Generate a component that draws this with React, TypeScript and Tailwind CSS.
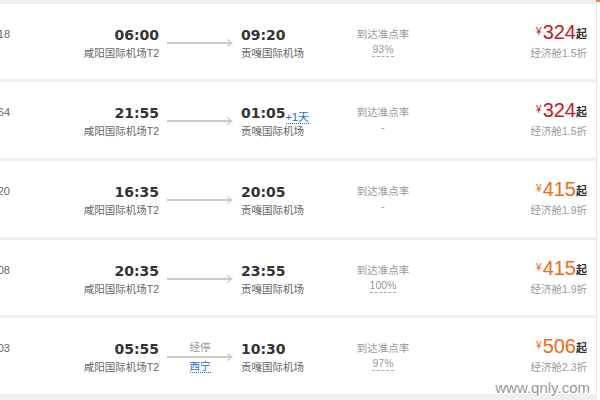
import React from "react";

type Flight = {
  no: string;
  dep: string;
  arr: string;
  plus?: string;
  via?: string;
  rate: string;
  price: string;
  disc: string;
  red: boolean;
  h: string;
};

const flights: Flight[] = [
  { no: "MU2218", dep: "06:00", arr: "09:20", rate: "93%", price: "324", disc: "经济舱1.5折", red: true, h: "h-[75px]" },
  { no: "MU2364", dep: "21:55", arr: "01:05", plus: "+1天", rate: "-", price: "324", disc: "经济舱1.5折", red: true, h: "h-[76px]" },
  { no: "CA1220", dep: "16:35", arr: "20:05", rate: "-", price: "415", disc: "经济舱1.9折", red: false, h: "h-[76px]" },
  { no: "CA4308", dep: "20:35", arr: "23:55", rate: "100%", price: "415", disc: "经济舱1.9折", red: false, h: "h-[75px]" },
  { no: "CA4303", dep: "05:55", arr: "10:30", via: "西宁", rate: "97%", price: "506", disc: "经济舱2.3折", red: false, h: "h-[76px]" },
];

function Arrow() {
  return (
    <svg width="66" height="8" viewBox="0 0 66 8" className="block">
      <line x1="0" y1="4" x2="65" y2="4" stroke="#c9c9c9" strokeWidth="2" />
      <polyline points="60,0.5 65,4 60,7.5" fill="none" stroke="#c9c9c9" strokeWidth="1.3" />
    </svg>
  );
}

function Row({ f }: { f: Flight }) {
  return (
    <div className={`flex ${f.h} shrink-0 w-full bg-white border-r border-[#e2e2e2]`}>
      <div className="w-[10px] overflow-hidden flex justify-end pt-[23px] text-[11px] leading-[14px] text-[#666] whitespace-nowrap">
        {f.no}
      </div>
      <div className="w-[149px] flex flex-col items-end pt-[22px]">
        <div className="font-['DejaVu_Sans'] font-bold text-[14px] leading-[18px] text-[#333]">{f.dep}</div>
        <div className="text-[10.5px] leading-[18px] text-[#666] whitespace-nowrap">咸阳国际机场T2</div>
      </div>
      <div className="w-[82px] flex flex-col items-center pt-[23px]">
        <div className="h-[12px] text-[10.5px] leading-[12px] text-[#999]">{f.via ? "经停" : ""}</div>
        <Arrow />
        <div className="h-[14px] mt-[-1px] flex items-start text-[10.5px] leading-[12px]">
          {f.via ? (
            <span className="text-[#1a6fcb] border-b border-dotted border-[#1a6fcb] leading-[12px]">
              {f.via}
            </span>
          ) : null}
        </div>
      </div>
      <div className="w-[102px] flex flex-col items-start pt-[22px]">
        <div className="flex items-baseline">
          <span className="font-['DejaVu_Sans'] font-bold text-[14px] leading-[18px] text-[#333]">{f.arr}</span>
          {f.plus ? (
            <span className="text-[11px] leading-[12px] text-[#1a6fcb] border-b border-dotted border-[#1a6fcb] translate-y-[3px] inline-block">
              {f.plus}
            </span>
          ) : null}
        </div>
        <div className="text-[10.5px] leading-[18px] text-[#666] whitespace-nowrap">贡嘎国际机场</div>
      </div>
      <div className="w-[80px] flex flex-col items-center pt-[23px] text-[10.5px] text-[#999]">
        <div className="leading-[15px]">到达准点率</div>
        <div className="leading-[13px] mt-[1px] flex">
          {f.rate === "-" ? (
            <span>-</span>
          ) : (
            <span className="border-b border-dashed border-[#aaa] leading-[13px]">{f.rate}</span>
          )}
        </div>
      </div>
      <div className="flex-1 flex flex-col items-end pr-[9px] pt-[17px]">
        <div className="flex items-baseline leading-[22px]">
          <span className={`text-[10px] self-start leading-[14px] mt-[4px] mr-[1px] ${f.red ? "text-[#c8161d]" : "text-[#f26a10]"}`}>¥</span>
          <span className={`text-[20px] leading-[22px] ${f.red ? "text-[#c8161d]" : "text-[#f26a10]"}`}>{f.price}</span>
          <span className="text-[11px] font-bold text-[#333] relative top-[-1px]">起</span>
        </div>
        <div className="text-[10.5px] leading-[14px] text-[#999] whitespace-nowrap">{f.disc}</div>
      </div>
    </div>
  );
}

export default function App() {
  return (
    <div className="relative w-[600px] h-[400px] overflow-hidden bg-white font-['Liberation_Sans','Noto_Sans_CJK_SC',sans-serif]">
      <div className="w-[597px] h-[400px] bg-[#efefef] pt-[4px] flex flex-col gap-[3px]">
        {flights.map((f, i) => (
          <Row key={i} f={f} />
        ))}
      </div>
      <div className="absolute top-0 right-0 w-[4px] h-[2px] bg-[#f08a3c]" />
      <div className="absolute top-[380px] right-[10px] text-[15px] leading-[15px] text-[#999] [text-shadow:0_0_2px_#fff,1px_1px_0_#fff]">
        www.qnly.com
      </div>
    </div>
  );
}
